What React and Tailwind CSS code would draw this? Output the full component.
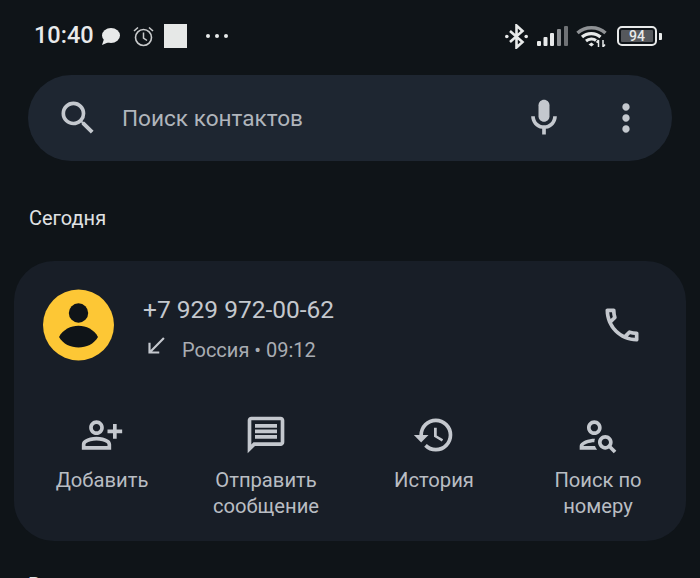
import React from 'react'
import { MdOutlinePersonSearch, MdOutlineCall, MdHistory, MdOutlinePersonAddAlt, MdSearch, MdOutlineMic, MdMoreVert, MdOutlineMessage, MdCallReceived } from 'react-icons/md'

function Bubble() {
  return (
    <svg width="19" height="17" viewBox="0 0 19 17" fill="#e8eaea">
      <ellipse cx="10" cy="7.5" rx="9" ry="7.5" />
      <path d="M3 11L1 17L8 14Z" />
    </svg>
  )
}

function Alarm() {
  return (
    <svg width="21" height="21" viewBox="0 0 21 21" fill="none" stroke="#c9cbcc">
      <circle cx="10.5" cy="11.5" r="8" strokeWidth="1.6" />
      <path d="M10.5 6.5V12L14 14.5" strokeWidth="1.5" />
      <path d="M1 5L5 1.5M20 5L16 1.5" strokeWidth="1.6" />
    </svg>
  )
}

function Bluetooth() {
  return (
    <svg width="23" height="25" viewBox="0 0 23 25" fill="none" stroke="#e8eaea" strokeWidth="2.6">
      <path d="M5 7L17.5 18L11.5 23.5V1.5L17.5 7L5 18" />
      <circle cx="1.8" cy="12.5" r="1.8" fill="#e8eaea" stroke="none" />
      <circle cx="21.2" cy="12.5" r="1.8" fill="#e8eaea" stroke="none" />
    </svg>
  )
}

function Signal() {
  return (
    <svg width="31" height="20" viewBox="0 0 31 20">
      <rect x="0" y="15" width="4" height="5" rx="1" fill="#e8eaea" />
      <rect x="6.5" y="11" width="4" height="9" rx="1" fill="#e8eaea" />
      <rect x="13" y="7" width="4" height="13" rx="1" fill="#e8eaea" />
      <rect x="20" y="3" width="4" height="17" rx="1" fill="#8a8d90" />
      <rect x="27" y="0" width="4" height="20" rx="1" fill="#6f7275" />
    </svg>
  )
}

function Wifi() {
  return (
    <svg width="31" height="22" viewBox="0 0 31 22" fill="none">
      <path d="M1.5 8C9 1 22 1 29.5 8" stroke="#8f9295" strokeWidth="3.4" />
      <path d="M6 12C11 7.5 19.5 7.5 24.5 12" stroke="#e8eaea" strokeWidth="3.2" />
      <path d="M10 16C13 13.5 17.5 13.5 20 15.5" stroke="#e8eaea" strokeWidth="3" />
      <path d="M12.5 19.5L15.5 17.5L18 19.5L15.5 21.5Z" fill="#e8eaea" />
      <path d="M22.5 15v7M20.5 17.5l2-2.5M27 15v7M29 19.5l-2 2.5" stroke="#e8eaea" strokeWidth="1.5" />
    </svg>
  )
}

function Battery() {
  return (
    <div className="flex items-center gap-[2px]">
      <div className="w-[40px] h-[20px] border-2 border-[#e8eaea] rounded-[5px] p-[2px]">
        <div className="h-full bg-[#55585c] rounded-[1px] flex items-center justify-center text-[#e8eaea] text-[14px] font-medium leading-none">94</div>
      </div>
      <div className="w-[3px] h-[7px] bg-[#e8eaea] rounded-r-[1px]" />
    </div>
  )
}

function Avatar() {
  return (
    <svg width="71" height="72" viewBox="0 0 71 72">
      <circle cx="35.5" cy="36" r="35.5" fill="#fdc735" />
      <circle cx="35.5" cy="24" r="9.7" fill="#0f1418" />
      <path d="M16 48C24 33 47 33 55 48C47 62 24 62 16 48Z" fill="#0f1418" />
    </svg>
  )
}

function Action({ icon, children }) {
  return (
    <div className="flex flex-col items-center">
      <div className="h-[40px] flex items-center justify-center text-[#c4c8ce]">{icon}</div>
      <div className="mt-[12px] text-center text-[20.2px] leading-[26px] text-[#b9bdc3]">{children}</div>
    </div>
  )
}

export default function App() {
  return (
    <div className="w-[700px] h-[578px] overflow-hidden bg-[#0f1418] font-['Roboto',sans-serif]">
      <div className="h-[75px] flex items-center pl-[34px] pr-[38px] pb-[3px]">
        <span className="w-[59px] text-[23.5px] font-medium text-[#e8eaea] leading-none">10:40</span>
        <div className="ml-[8px] mt-[1px]"><Bubble /></div>
        <div className="ml-[13px]"><Alarm /></div>
        <div className="ml-[10px] w-[23px] h-[24px] bg-[#e6e8e7]" />
        <div className="ml-[19px] flex gap-[5px]">
          <div className="w-[4px] h-[4px] rounded-full bg-[#e8eaea]" />
          <div className="w-[4px] h-[4px] rounded-full bg-[#e8eaea]" />
          <div className="w-[4px] h-[4px] rounded-full bg-[#e8eaea]" />
        </div>
        <div className="ml-auto flex items-center">
          <Bluetooth />
          <div className="ml-[9px]"><Signal /></div>
          <div className="ml-[8px]"><Wifi /></div>
          <div className="ml-[10px]"><Battery /></div>
        </div>
      </div>

      <div className="mx-[28px] h-[86px] rounded-full bg-[#1e2631] flex items-center pl-[28px] pr-[24px]">
        <MdSearch className="text-[#c4c8ce]" size={44} />
        <span className="ml-[22px] pt-[1px] text-[22.6px] text-[#b0b5bc]">Поиск контактов</span>
        <MdOutlineMic className="ml-auto text-[#c4c8ce]" size={44} />
        <MdMoreVert className="ml-[38px] text-[#c4c8ce]" size={44} />
      </div>

      <div className="mt-[43px] ml-[29px] text-[20px] leading-[28px] text-[#e0e2e4]">Сегодня</div>

      <div className="mt-[29px] mx-[14px] h-[280px] rounded-[40px] bg-[#181e27]">
        <div className="h-[100px] flex items-start pt-[28px] pl-[29px] pr-[42px]">
          <Avatar />
          <div className="ml-[29px] flex-1">
            <div className="text-[24.5px] leading-[32px] pt-[5px] text-[#c4c8ce]">+7 929 972-00-62</div>
            <div className="flex items-center mt-[2px] text-[20px] leading-[28px] text-[#a9adb3]">
              <MdCallReceived className="text-[#c4c8ce]" size={26} />
              <span className="ml-[13px] pt-[8px]">Россия • 09:12</span>
            </div>
          </div>
          <MdOutlineCall className="mt-[14px] text-[#c4c8ce]" size={44} />
        </div>
        <div className="mt-[54px] px-[6px] grid grid-cols-[164px_164px_172px_156px]">
          <Action icon={<MdOutlinePersonAddAlt size={44} />}>Добавить</Action>
          <Action icon={<MdOutlineMessage size={44} />}>Отправить<br />сообщение</Action>
          <Action icon={<MdHistory size={44} />}>История</Action>
          <Action icon={<MdOutlinePersonSearch size={44} />}>Поиск по<br />номеру</Action>
        </div>
      </div>

      <div className="mt-[30px] ml-[28px] text-[20px] leading-[28px] text-[#e0e2e4]">Вчера</div>
    </div>
  )
}
